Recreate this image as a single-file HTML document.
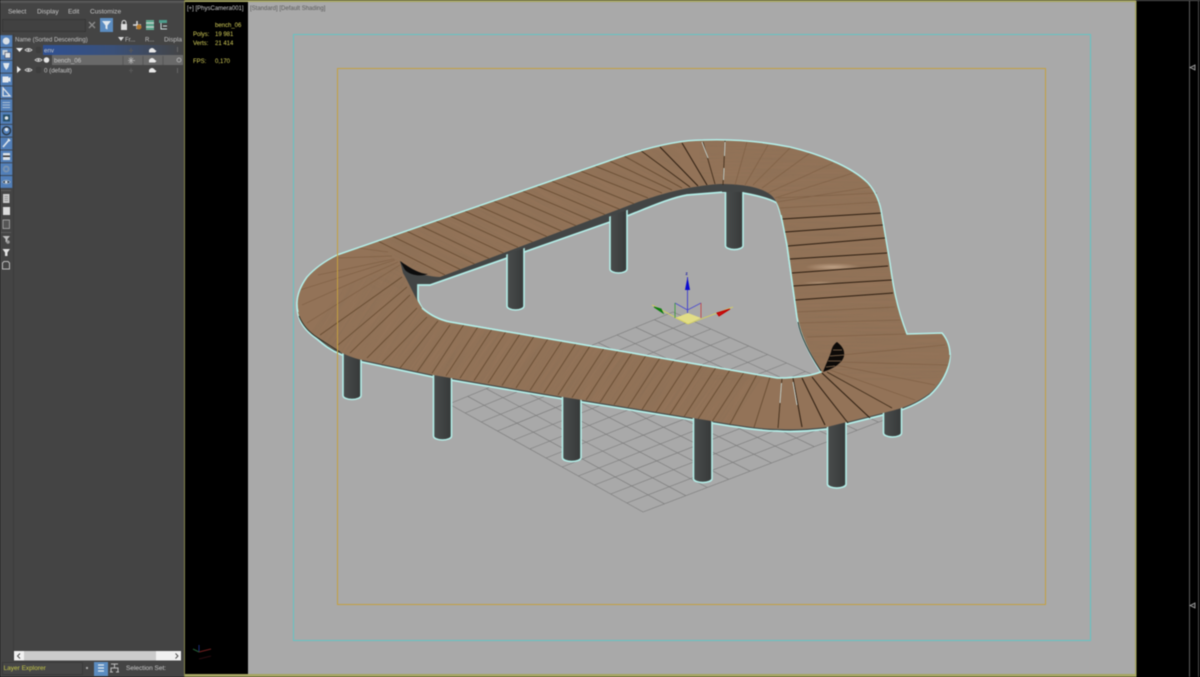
<!DOCTYPE html>
<html><head><meta charset="utf-8"><style>
html,body{margin:0;padding:0;background:#000;width:1200px;height:677px;overflow:hidden}
svg{display:block;filter:blur(.4px)}
text{font-family:"Liberation Sans",sans-serif}
</style></head><body>
<svg width="1200" height="677" viewBox="0 0 1200 677" xmlns="http://www.w3.org/2000/svg">
<defs>
<linearGradient id="envg" x1="0" x2="1" y1="0" y2="0"><stop offset="0" stop-color="#2f5092"/><stop offset="0.5" stop-color="#3a5078"/><stop offset="1" stop-color="#444"/></linearGradient>
<linearGradient id="pil" x1="0" x2="1" y1="0" y2="0"><stop offset="0" stop-color="#494c4c"/><stop offset="0.6" stop-color="#3e4141"/><stop offset="1" stop-color="#363838"/></linearGradient>
<radialGradient id="hl"><stop offset="0" stop-color="#c9ad92" stop-opacity=".8"/><stop offset="1" stop-color="#c9ad92" stop-opacity="0"/></radialGradient>
<filter id="grain" x="0" y="0" width="1" height="1"><feTurbulence type="fractalNoise" baseFrequency="0.02 0.55" numOctaves="2" seed="4"/><feColorMatrix type="matrix" values="0 0 0 0 0.22 0 0 0 0 0.15 0 0 0 0 0.09 0 0 0 1.3 -0.45"/></filter>
<clipPath id="woodclip"><path clip-rule="evenodd" d="M337 255L620 157C650 147 680 140 703 140C730 139 760 141 790 147C815 153 850 165 868 183C875 191 879 200 881 210L890 263C893 285 896 305 907 334L942 333C948 340 950 347 950 355C949 368 942 382 930 393C918 402 905 408 887 412L827 427C810 429 790 430 777 429C760 429 745 426 730 424L693 418L563 397L433 375L362 360C353 358 346 355 340 352C330 348 323 342 317 337C307 330 300 322 298 312C295 300 299 288 307 277C315 268 325 261 337 255Z M400 261C410 270 425 277 440 277L625 207C650 197 685 186 720 184C745 184 765 188 773 197C778 203 780 210 781 215L787 245L797 317C800 335 810 355 821 372C810 376 800 377 785 378L777 378L620 351L450 322C440 320 430 315 422 308C415 298 410 285 403 273Z"/></clipPath>
<clipPath id="regArm"><rect x="370" y="130" width="310" height="160"/></clipPath>
<clipPath id="regFront"><path d="M300 300L420 260L470 320L780 370L780 440L300 440Z"/></clipPath>
<clipPath id="regRight"><rect x="700" y="130" width="260" height="250"/></clipPath>
</defs>
<rect width="1200" height="677" fill="#000"/>
<!-- left panel -->
<rect x="0" y="0" width="184" height="677" fill="#444"/>
<rect x="0" y="0" width="184" height="3" fill="#555"/>
<rect x="13" y="34" width="1" height="627" fill="#3c3c3c"/>
<g font-size="6.600" fill="#c6c6c6">
<text x="8" y="13.500">Select</text><text x="37" y="13.500">Display</text><text x="68" y="13.500">Edit</text><text x="90" y="13.500">Customize</text>
</g>
<rect x="2.500" y="19.500" width="83" height="12" fill="#414141" stroke="#363636"/>
<path d="M89 22l6 6M95 22l-6 6" stroke="#8a8a8a" stroke-width="1.400"/>
<rect x="100" y="18" width="13" height="14" fill="#5b8cc0"/>
<path d="M102 21h9l-3.500 4.500v4l-2-1v-3z" fill="#dfe8ee"/>
<rect x="121" y="24" width="6" height="6" fill="#ddd"/><path d="M122 24v-1.500a2 2 0 0 1 4 0V24" fill="none" stroke="#ddd"/>
<path d="M133 25h8M137 21v8" stroke="#ddd" stroke-width="1.500"/><circle cx="139" cy="27" r="2.500" fill="#b5792b"/>
<rect x="146" y="20" width="8" height="10" fill="#5fa58c"/><path d="M146 23h8M146 27h8" stroke="#ddd"/>
<rect x="159" y="20" width="8" height="3" fill="#4d9d8c"/><path d="M161 23v6h6M163 26h4" stroke="#cdd" fill="none"/>
<g font-size="6" fill="#c2c2c2">
<text x="15" y="41.500">Name (Sorted Descending)</text>
<text x="125" y="41.500">Fr...</text><text x="145" y="41.500">R...</text>
<text x="164" y="41.500" textLength="18" lengthAdjust="spacingAndGlyphs">Displa</text>
</g>
<path d="M118 37h6l-3 4z" fill="#ddd"/>
<rect x="43" y="45" width="140" height="10" fill="url(#envg)"/>
<rect x="52" y="55" width="131" height="10" fill="#696969"/>
<path d="M123 56v9M143 56v9M163 56v9" stroke="#555"/>
<path d="M16 48h7l-3.500 4z" fill="#eee"/>
<path d="M17 66v7l4-3.500z" fill="#eee"/>
<g fill="none" stroke="#c8c8c8" stroke-width=".9">
<path d="M25 50q3.500-3 7 0q-3.500 3-7 0z"/><path d="M35 60q3.500-3 7 0q-3.500 3-7 0z"/><path d="M25 70q3.500-3 7 0q-3.500 3-7 0z"/>
</g>
<circle cx="28.500" cy="50" r="1" fill="#ccc"/><circle cx="38.500" cy="60" r="1" fill="#ccc"/><circle cx="28.500" cy="70" r="1" fill="#ccc"/>
<circle cx="46.500" cy="60" r="2.800" fill="#e4e4e4"/>
<g fill="#3d3d3d"><rect x="36" y="47" width="5" height="6"/><rect x="36" y="67" width="5" height="6"/></g>
<g font-size="6.200" fill="#c8c8c8"><text x="44" y="52.500">env</text><text x="54" y="62.500">bench_06</text><text x="44" y="72.500">0 (default)</text></g>
<g fill="#e8e8e8">
<path d="M149 50q3-4 6 0l1.500 1-1.500 1.500h-6z"/><path d="M149 60q3-4 6 0l1.500 1-1.500 1.500h-6z"/><path d="M149 70q3-4 6 0l1.500 1-1.500 1.500h-6z"/>
</g>
<path d="M131 57v7M128 60.500h7M129 58l4 5M133 58l-4 5" stroke="#b5b5b5" stroke-width=".7"/>
<path d="M131 48v5M129 50.500h4M131 68v5M129 70.500h4" stroke="#575757"/>
<rect x="177" y="47" width="1" height="5" fill="#666"/><circle cx="179" cy="60" r="2" fill="none" stroke="#aaa"/><rect x="177" y="68" width="1" height="5" fill="#666"/>
<!-- left toolbar -->
<g fill="#527fb8" stroke="#3a4656" stroke-width=".5">
<rect x="0" y="35" width="12.500" height="12.300"/><rect x="0" y="47.800" width="12.500" height="12.300"/><rect x="0" y="60.600" width="12.500" height="12.300"/><rect x="0" y="73.400" width="12.500" height="12.300"/><rect x="0" y="86.200" width="12.500" height="12.300"/><rect x="0" y="99" width="12.500" height="12.300"/><rect x="0" y="111.800" width="12.500" height="12.300"/><rect x="0" y="124.600" width="12.500" height="12.300"/><rect x="0" y="137.400" width="12.500" height="12.300"/><rect x="0" y="150.200" width="12.500" height="12.300"/><rect x="0" y="163" width="12.500" height="12.300"/><rect x="0" y="175.800" width="12.500" height="12.300"/>
</g>
<circle cx="6.200" cy="41" r="3.500" fill="#d8dfe6"/>
<rect x="2.500" y="50" width="5" height="5" fill="#c8d0d8"/><rect x="5" y="52.500" width="5.500" height="5.500" fill="#dfe4e8" stroke="#445" stroke-width=".6"/>
<path d="M3 63h6.500l-1 4-2.200 3-2.200-3z" fill="#dfe6ec"/>
<rect x="2.500" y="76.500" width="6" height="6" fill="#e6eaee"/><path d="M8.500 78l2-1v5l-2-1z" fill="#e6eaee"/>
<path d="M3 96V88l7 8z" fill="none" stroke="#e0e4e8" stroke-width="1.300"/>
<path d="M2.500 102.500h7.500M2.500 105h7.500M2.500 107.500h7.500" stroke="#a8bcd4" stroke-width=".9"/>
<rect x="3" y="114.500" width="7" height="7" fill="#28506a"/><circle cx="6.500" cy="118" r="1.800" fill="#e0e6e8"/>
<circle cx="6.500" cy="130.700" r="4" fill="none" stroke="#2a3a4a" stroke-width="1.500"/><circle cx="6.500" cy="129.500" r="1.700" fill="#dfe6ec"/>
<path d="M3 147l6-7M8 139l2 2" stroke="#dfe6ec" stroke-width="1.600"/>
<rect x="3" y="153" width="7" height="7" fill="#dce2e8"/><rect x="3" y="155.500" width="7" height="1.500" fill="#333"/>
<circle cx="6.200" cy="169" r="3.500" fill="#7993b0"/><circle cx="6.200" cy="169" r="1.500" fill="#527fb8"/>
<path d="M2 182q4.200-3.500 8.500 0q-4.300 3.500-8.500 0z" fill="#2e4258" stroke="#d5dde4" stroke-width=".5"/><circle cx="6.200" cy="182" r="1.300" fill="#dfe6ec"/>
<rect x="1" y="190" width="10" height="1" fill="#5c5c5c"/>
<rect x="3" y="194" width="6.500" height="9" fill="#c9c9c9"/><path d="M4.500 196.500h3.500M4.500 198.500h3.500M4.500 200.500h3.500" stroke="#666" stroke-width=".6"/>
<rect x="3" y="207" width="7" height="8" fill="#dcdcdc"/>
<rect x="3" y="220" width="6.500" height="8.500" fill="#555" stroke="#bbb" stroke-width=".7"/>
<rect x="1" y="232" width="10" height="1" fill="#5c5c5c"/>
<path d="M2.500 236h7.500l-2.500 3v3h-2v-3z" fill="#bcbcbc"/><circle cx="8" cy="242" r="1.800" fill="#999"/>
<path d="M2.500 249h7.500l-2.500 3.500v3.500h-2.500v-3.500z" fill="#e2e2e2"/>
<path d="M2.500 269v-6l1.500-1.500h4l1.500 1.500v6z" fill="none" stroke="#bcbcbc"/>
<!-- scroll + status -->
<rect x="14" y="651" width="167" height="9.500" fill="#f1f1f1"/>
<rect x="24" y="651" width="132" height="9.500" fill="#cbcbcb"/>
<path d="M20 653.500l-2.500 2.500 2.500 2.500M175.500 653.500l2.500 2.500-2.500 2.500" fill="none" stroke="#444" stroke-width=".9"/>
<rect x="2.500" y="662.500" width="80" height="12" fill="#464646" stroke="#393939"/>
<text x="3.500" y="670" font-size="6.500" fill="#c6c94a">Layer Explorer</text>
<rect x="86" y="667" width="2" height="2" fill="#aaa"/>
<rect x="94" y="662" width="14" height="14" fill="#5b8cc0"/>
<path d="M98 665h6M98 668h6M98 671h6" stroke="#e5edf2" stroke-width="1.300"/>
<path d="M111 664h7M114.500 664v4M111 672v-4h7v4M110 672h3M116 672h3" fill="none" stroke="#bcbcbc"/>
<text x="126" y="670" font-size="6.500" fill="#c9c9c9">Selection Set:</text>
<!-- viewport -->
<rect x="184" y="0" width="1" height="677" fill="#86864f"/>
<rect x="185" y="1" width="63" height="673" fill="#000"/>
<rect x="248" y="2" width="887" height="672" fill="#a9a9a9"/>
<rect x="185" y="0" width="951" height="2" fill="#a5a562"/>
<rect x="185" y="674" width="951" height="3" fill="#a5a562"/>
<rect x="1135" y="0" width="1.500" height="677" fill="#a5a562"/>
<rect x="1136" y="0" width="64" height="1" fill="#555"/>
<rect x="1189" y="0" width="1" height="677" fill="#5c5c5c"/>
<rect x="1198" y="0" width="1" height="677" fill="#4a4a4a"/>
<path d="M1195 65l-5 2.500 5 2.500zM1195 603l-5 2.500 5 2.500z" fill="#222" stroke="#aaa" stroke-width=".8"/>
<text x="187" y="10" font-size="6" fill="#d0d0d0">[+] [PhysCamera001]</text>
<text x="250" y="10" font-size="6" fill="#5a5a5a">[Standard] [Default Shading]</text>
<g font-size="6" fill="#d8d25a">
<text x="215" y="27">bench_06</text>
<text x="193" y="36">Polys:</text><text x="215" y="36">19 981</text>
<text x="193" y="45">Verts:</text><text x="215" y="45">21 414</text>
<text x="193" y="63">FPS:</text><text x="215" y="63">0,170</text>
</g>
<path d="M199 652v-7" stroke="#1c2c78"/><path d="M199 652l-6 -3" stroke="#255c35"/><path d="M199 652l12-3" stroke="#742020"/><path d="M199 659l12-3" stroke="#2a0a10"/>
<!-- safe frame cyan -->
<rect x="293.500" y="34.500" width="797" height="606" fill="none" stroke="#62c4c4" stroke-width="1"/>
<!-- grid -->
<path fill="none" stroke="#7a7a7a" stroke-width=".6" d="M673 312L900 414M654.300 319.700L878.600 422.200M635.700 327.300L857.200 430.300M617 335L835.800 438.500M598.300 342.700L814.300 446.700M579.700 350.300L792.900 454.800M561 358L771.500 463M542.300 365.700L750.100 471.200M523.700 373.300L728.700 479.300M505 381L707.300 487.500M486.300 388.700L685.800 495.700M467.700 396.300L664.400 503.800M449 404L643 512M673 312L449 404M691.900 320.500L465.200 413M710.800 329L481.300 422M729.800 337.500L497.500 431M748.700 346L513.700 440M767.600 354.500L529.800 449M786.500 363L546 458M805.400 371.500L562.200 467M824.300 380L578.300 476M843.300 388.500L594.500 485M862.200 397L610.700 494M881.100 405.500L626.800 503M900 414L643 512"/>
<!-- silhouette -->
<path fill-rule="evenodd" fill="#424545" stroke="#b4eee8" stroke-width="1.700" d="M337 257L620 159C650 149 680 142 703 142C730 141 760 143 790 149C815 155 850 167 868 185C875 193 879 202 881 212L890 265C893 287 896 307 907 336L942 335C948 342 950 349 950 357C949 370 942 384 930 395C918 404 905 410 887 414L827 429C810 431 790 432 777 431C760 431 745 428 730 426L693 420L563 399L433 377L362 362C353 360 346 357 340 354C330 350 323 344 317 339C307 332 300 324 298 314C295 302 299 290 307 279C315 270 325 263 337 257Z M418 285L430 285L627 216C650 207 670 198 687 195L725 192L743 193C760 196 770 199 777 203C780 210 784 228 787 245L797 317C800 335 810 355 821 372C810 376 800 377 785 378L777 378L620 351L450 322C440 320 430 315 422 308C420 304 418 302 418 298Z"/>
<!-- pillars -->
<g fill="url(#pil)" stroke="#b4eee8" stroke-width="1.600">
<path d="M507 230V306a8.500 4 0 0 0 17 0V230"/>
<path d="M610 200V269a8.500 4 0 0 0 17 0V200"/>
<path d="M725.500 175V246a8.800 4 0 0 0 17.500 0V175"/>
<path d="M343 340V395.500a9 4 0 0 0 18 0V340"/>
<path d="M433.500 360V436a9 4 0 0 0 18 0V360"/>
<path d="M562.500 385V458a9.300 4 0 0 0 18.500 0V385"/>
<path d="M693.500 405V479a9.300 4 0 0 0 18.500 0V405"/>
<path d="M827.500 415V484.500a9.300 4 0 0 0 18.500 0V415"/>
<path d="M883.500 400V433a9 4 0 0 0 18 0V400"/>
</g>
<!-- dark side re-cover for back pillar tops -->
<path fill="#424545" d="M505 235L530 226L530 246L505 255ZM608 198L630 190L630 209L608 217ZM722 180L746 180L746 192L722 192Z"/>
<!-- wood -->
<path fill-rule="evenodd" fill="#937358" d="M337 255L620 157C650 147 680 140 703 140C730 139 760 141 790 147C815 153 850 165 868 183C875 191 879 200 881 210L890 263C893 285 896 305 907 334L942 333C948 340 950 347 950 355C949 368 942 382 930 393C918 402 905 408 887 412L827 427C810 429 790 430 777 429C760 429 745 426 730 424L693 418L563 397L433 375L362 360C353 358 346 355 340 352C330 348 323 342 317 337C307 330 300 322 298 312C295 300 299 288 307 277C315 268 325 261 337 255Z M400 261C410 270 425 277 440 277L625 207C650 197 685 186 720 184C745 184 765 188 773 197C778 203 780 210 781 215L787 245L797 317C800 335 810 355 821 372C810 376 800 377 785 378L777 378L620 351L450 322C440 320 430 315 422 308C415 298 410 285 403 273Z"/>
<g clip-path="url(#woodclip)" opacity=".5">
<g clip-path="url(#regArm)"><rect x="355" y="65" width="340" height="340" filter="url(#grain)" transform="rotate(27 525 235)"/></g>
<g clip-path="url(#regFront)"><rect x="340" y="150" width="400" height="400" filter="url(#grain)" transform="rotate(-56 540 350)"/></g>
<g clip-path="url(#regRight)"><rect x="690" y="125" width="270" height="310" filter="url(#grain)"/></g>
</g>
<ellipse cx="833" cy="267" rx="28" ry="4" fill="url(#hl)"/>
<ellipse cx="820" cy="283" rx="18" ry="2" fill="url(#hl)" opacity=".6"/>
<!-- plank lines -->
<path fill="none" stroke="#64492f" stroke-width=".8" d="M378 241L445 275M392 236L460 269.400M406.500 231L474.500 264M421 226L489 258.500M435.500 221L503.500 253M450 216L518 247.300M464.500 211L532.500 242M479 206L547 236.600M493.500 201L561.500 231M508 196L576 225.700M522.500 191L590.500 220M537 186L605 214.600M551.500 181L619.500 209.300M566 176L634 203.700M580.500 171L648 198M595 166L662 193M609.500 161L672 190M624 156L682 188
M464 324.400L432 373.300M478 326.800L446 375.800M492 329.200L460 378.200M506 331.600L474 380.600M520 334L488 383M534 336.400L502 385.500M548 338.800L516 388M562 341.200L530 390.300M576 343.500L544 392.700M590 346L558 395M604 348.300L572 397.600M618 350.700L586 400M632 353L600 402.400M646 355.500L614 404.800M660 358L628 407.200M674 360.300L642 409.600M688 362.700L656 412M702 365L670 414.400M716 367.500L684 416.800M730 370L698 419M744 372.300L712 421.600M757 374.500L730 424M770 377L754 427.500
M402 277L320 335M407 287L338 345M410 295L350 353M417 308L367 358M427 317L382 363M438 321L400 368M450 325L417 372"/>
<path fill="none" stroke="#7b5c41" stroke-width=".6" d="M400 265L307 323M398 262L302 305M395 260L300 290M394 259L318 275M392 256L337 258M388 252L358 248
M747 142L735 185M768 145L745 185M790 148L753 185M810 153L762 188M833 163L768 193M853 173L775 198M870 187L777 202M778 198L877 193M780 208L880 202M797 312L895 307M800 323L900 320M807 337L907 334M830 370L915 400M835 365L935 385M840 362L948 365M842 355L945 345"/>
<path fill="none" stroke="#2c1d10" stroke-width="1" d="M660 147L698 186M682 143L707 185M782 219L882 213M785 232L883 225M788 246L885 238M790 259L887 253M792 273L888 266M793 286L892 280M795 300L893 293M793 378L802 427M802 378L825 425M812 377L848 423M822 373L870 418"/>
<path fill="none" stroke="#3a2816" stroke-width=".8" d="M640 150L690 187M703 142L715 184M725 140L723 185M782 378L778 428M827 372L892 408"/>
<path fill="none" stroke="#d8e8e4" stroke-width=".8" d="M725 142L724.500 156M724 168L723.500 180M702 142L708 158M781.500 383L780 403M793 382L797 405"/>
<!-- arm end crescent + hole -->
<path d="M400 261C410 268 420 274 428 274C420 277 410 275 405 270Z" fill="#0c0c0c"/>
<path d="M837 342C842 346 845 350 844 356C842 364 832 369 823 372C826 364 829 358 831 352C832 347 834 344 837 342Z" fill="#0d0a08"/>
<path d="M833 350L842 350M830 356L844 355M828 361L841 361M826 367L835 366" stroke="#8a6e52" stroke-width=".8"/>
<!-- cyan highlights over wood -->
<path fill="none" stroke="#b4eee8" stroke-width="1.500" d="M298 312C295 300 299 288 307 277C315 268 325 261 337 255L620 157C650 147 680 140 703 140C730 139 760 141 790 147C815 153 850 165 868 183C875 191 879 200 881 210L890 263C893 285 896 305 907 334L942 333C948 340 950 347 950 355"/>
<path fill="none" stroke="#b4eee8" stroke-width="1.500" d="M781 215L787 245L797 317C800 335 810 355 821 372C810 376 800 377 785 378L777 378L620 351L450 322C440 320 430 315 422 308"/>
<path fill="none" stroke="#1d2020" stroke-width=".8" d="M798 322C801 338 811 356 821 371"/>
<path fill="none" stroke="#2c2c24" stroke-width="1" d="M299 316C303 326 310 333 318 338L340 352"/>
<!-- orange frame over the model -->
<rect x="337.500" y="68.500" width="708" height="536" fill="none" stroke="#c4a040" stroke-width="1"/>
<!-- gizmo -->
<path d="M675 318L688 313L701 318L688 324Z" fill="#e2dd86"/>
<path d="M688 324L733 307M688 324L652 305" stroke="#d8d45a" stroke-width=".9"/>
<path d="M687.500 277V313" stroke="#3a3ad0" stroke-width=".9"/>
<path d="M687.500 277l-2.500 13h5z" fill="#0c0cd0"/>
<path d="M675 303L687.500 310L701 303" fill="none" stroke="#4a4ad0" stroke-width=".8"/>
<path d="M675 303V318" stroke="#2f9a2f" stroke-width=".8"/><path d="M701 303V318" stroke="#c83a3a" stroke-width=".8"/>
<path d="M717 313L730 309L719 316Z" fill="#d01010" stroke="#b00"/>
<path d="M663 313L654 307L661 309Z" fill="#0d8a0d" stroke="#0a7a0a"/>
<text x="685.500" y="275" font-size="4.500" fill="#1818a0" font-weight="bold">z</text>
</svg>
</body></html>
